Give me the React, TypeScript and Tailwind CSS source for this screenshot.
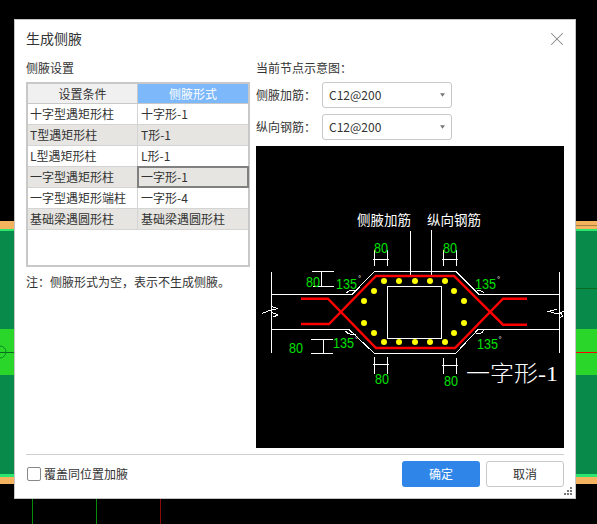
import React from 'react';
import { X } from 'lucide-react';

const font = { fontFamily: '"Noto Sans CJK SC", sans-serif' };

const rows = [
  ['十字型遇矩形柱', '十字形-1'],
  ['T型遇矩形柱', 'T形-1'],
  ['L型遇矩形柱', 'L形-1'],
  ['一字型遇矩形柱', '一字形-1'],
  ['一字型遇矩形端柱', '一字形-4'],
  ['基础梁遇圆形柱', '基础梁遇圆形柱'],
];

// CAD canvas behind the dialog
const CadCanvas = () => (
  <svg className="absolute inset-0 block" width="597" height="524" viewBox="0 0 597 524" shapeRendering="crispEdges">
    <rect width="597" height="524" fill="#000" />
    <rect y="221" width="597" height="8" fill="#f4b45f" />
    <rect x="576" y="225" width="21" height="1" fill="#a87f3c" />
    <rect y="229" width="597" height="2" fill="#2ee56e" />
    <rect y="231" width="597" height="98" fill="#078a4a" />
    <rect y="329" width="597" height="46" fill="#2bd62b" />
    <rect y="375" width="597" height="99" fill="#078a4a" />
    <rect y="474" width="597" height="3" fill="#2ee56e" />
    <rect y="477" width="597" height="7" fill="#f4b45f" />
    <rect x="576" y="288" width="21" height="1" fill="#0a6a20" />
    <rect y="352" width="14" height="1" fill="#0a6a20" />
    <circle cx="0" cy="352" r="6" fill="none" stroke="#0a8a20" shapeRendering="auto" />
    <rect x="576" y="352" width="21" height="1" fill="#ff0000" />
    <rect x="32" y="499" width="1" height="25" fill="#0a8a0a" />
    <rect x="96" y="499" width="1" height="25" fill="#0a8a0a" />
    <rect x="160" y="499" width="1" height="25" fill="#8a0a0a" />
  </svg>
);

const Dim = ({ d }: { d: string }) => <path d={d} fill="none" stroke="#fff" strokeWidth="1" shapeRendering="crispEdges" />;

const GreenNum = ({ x, y, n }: { x: number; y: number; n: string }) => (
  <text x={x} y={y} fill="#00e000" fontSize="15" textLength={n.length * 7} lengthAdjust="spacingAndGlyphs" style={{ fontFamily: '"Liberation Sans", sans-serif' }}>
    {n}
  </text>
);

const dots = [
  [384, 281], [399, 281], [415, 281], [430, 281], [445, 281],
  [374, 291], [364, 301], [454, 291], [464, 301],
  [364, 323], [374, 333], [464, 323], [454, 333],
  [384, 342], [399, 342], [415, 342], [430, 342], [445, 342],
];

// node sketch, coordinates follow the page so they are easy to compare
const NodeSketch = () => (
  <svg className="block" width="308" height="302" viewBox="256 146 308 302">
    <rect x="256" y="146" width="308" height="302" fill="#000" />
    <g fill="none" stroke="#fff" strokeWidth="1" shapeRendering="crispEdges">
      <path d="M271 272V353M559 272V353" />
      <path d="M271 294.5H352L374.5 271.5H456L479 294.5H559" />
      <path d="M271 329.5H349L374 353H456L478 329.5H559" />
      <path d="M387.5 286.5H441.5V338.5H387.5Z" />
      <path d="M410.5 231V276M431 230V276" />
      <path d="M262 313.5L271 310L278 308.5L271 306.5M271 312L278 315L273 317" />
      <path d="M557 309L549 311.5L557 314L564 311M559 311L563 316L559 318" />
    </g>
    <g fill="none" stroke="#ff0000" strokeWidth="2.4">
      <path d="M301 298.7H328L376 348H455L503 298.7H527" />
      <path d="M301 324H329L376 276H454L503 324.7H527" />
    </g>
    {dots.map(([x, y]) => (
      <circle key={`${x}-${y}`} cx={x} cy={y} r="3" fill="#ffff00" />
    ))}
    <Dim d="M374.3 250V265.7M387.7 250V265.7M373 259H389" />
    <Dim d="M443.3 250V265.7M456 250V265.7M442 259H457.5" />
    <Dim d="M312 271.3H334M313 286.7H334M321.7 271V287" />
    <Dim d="M311 339.3H333M311 353.3H333M323 339V354" />
    <Dim d="M374.3 357V374M387 357V374M373 364.3H388.5" />
    <Dim d="M443.3 358V374M456 358V374M442 365H457.5" />
    <Dim d="M346 293Q351 289 355 291M477 291Q482 290 484 293M345 331Q350 336 356 334M476 334Q482 334 484 330" />
    <GreenNum x={374} y={253} n="80" />
    <GreenNum x={443} y={253} n="80" />
    <GreenNum x={306} y={287} n="80" />
    <GreenNum x={289} y={352.5} n="80" />
    <GreenNum x={375} y={383.5} n="80" />
    <GreenNum x={444} y={386} n="80" />
    <GreenNum x={336} y={289} n="135" />
    <GreenNum x={475} y={289} n="135" />
    <GreenNum x={333} y={348} n="135" />
    <GreenNum x={477} y={349} n="135" />
    <g fill="#fff" fontSize="8" style={{ fontFamily: '"Liberation Sans", sans-serif' }}>
      <text x="358" y="281">°</text>
      <text x="497" y="282">°</text>
      <text x="355" y="342">°</text>
      <text x="498.5" y="342">°</text>
    </g>
    <g fill="#fff" style={font}>
      <text x="357" y="225" fontSize="13.5">侧腋加筋</text>
      <text x="427" y="225" fontSize="13.5">纵向钢筋</text>
      <text
        x="466"
        y="381"
        fontSize="22"
        fontWeight="200"
        textLength="92"
        lengthAdjust="spacingAndGlyphs"
        style={{ fontFamily: '"Liberation Serif", "Noto Sans CJK SC", serif' }}
      >
        一字形-1
      </text>
    </g>
  </svg>
);

const SelectRow = ({ label }: { label: string }) => (
  <div className="flex items-center h-[26px]">
    <span className="w-[66px] text-[12px] text-[#333]">{label}</span>
    <div className="flex-1 w-[130px] max-w-[130px] h-[26px] border border-[#c8c8c8] rounded-[3px] flex items-center justify-between pl-[6px] pr-[5px] text-[12px] text-[#333]">
      <span>C12@200</span>
      <svg width="5" height="4" viewBox="0 0 6 4" className="mr-[1px]">
        <path d="M0 0H6L3 4Z" fill="#777" />
      </svg>
    </div>
  </div>
);

export default function App() {
  return (
    <div className="relative w-[597px] h-[524px] overflow-hidden bg-black" style={font}>
      <CadCanvas />

      <div className="absolute left-[14px] top-[19px] w-[562px] h-[480px] bg-white border border-[#c4c4c4] flex flex-col px-[11px]">
        <div className="h-[38px] pb-[2px] flex items-center justify-between shrink-0">
          <span className="text-[14px] text-[#333]">生成侧腋</span>
          <X className="w-[22px] h-[22px] text-[#888] -mr-[4px] mt-[1px]" strokeWidth={1.1} />
        </div>

        <div className="flex gap-[6px]">
          <div className="w-[224px] shrink-0">
            <div className="h-[20px] mb-[4px] flex items-center text-[12px] text-[#333]">侧腋设置</div>
            <div className="h-[185px] border-2 border-[#c8c8c8] text-[12px] text-[#333]">
              <div className="flex h-[20px] border-b border-[#c8c8c8]">
                <div className="w-[110px] bg-[#f0f0f0] border-r border-[#c8c8c8] flex items-center justify-center">设置条件</div>
                <div className="flex-1 bg-[#7cb8fa] text-white flex items-center justify-center">侧腋形式</div>
              </div>
              {rows.map(([a, b], i) => (
                <div key={a} className={`flex h-[21px] border-b border-[#d4d4d4] ${i % 2 === 1 ? 'bg-[#e6e5e1]' : 'bg-white'}`}>
                  <div className="w-[110px] border-r border-[#d4d4d4] pl-[2px] flex items-center whitespace-nowrap">{a}</div>
                  <div className={`flex-1 pl-[3px] flex items-center whitespace-nowrap ${i === 3 ? 'outline-2 -outline-offset-1 outline-[#808080]' : ''}`}>{b}</div>
                </div>
              ))}
            </div>
            <div className="mt-[5px] text-[12px] leading-[20px] text-[#333]">注：侧腋形式为空，表示不生成侧腋。</div>
          </div>

          <div className="w-[308px] shrink-0">
            <div className="h-[20px] mb-[4px] flex items-center text-[12px] text-[#333]">当前节点示意图：</div>
            <div className="flex flex-col gap-[6px] mb-[6px]">
              <SelectRow label="侧腋加筋：" />
              <SelectRow label="纵向钢筋：" />
            </div>
            <NodeSketch />
          </div>
        </div>

        <div className="mt-[6px] border-t border-[#cfcfcf] h-[1px] shrink-0" />

        <div className="flex items-center justify-between pt-[6px]">
          <label className="flex items-center gap-[3px] text-[12px] text-[#333] ml-[1px]">
            <span className="w-[14px] h-[14px] border border-[#888] rounded-[2px] bg-white" />
            覆盖同位置加腋
          </label>
          <div className="flex gap-[6px]">
            <button className="w-[78px] h-[26px] bg-[#2f86e8] text-white text-[12px] rounded-[3px]">确定</button>
            <button className="w-[78px] h-[26px] bg-white border border-[#c8c8c8] text-[#333] text-[12px] rounded-[3px]">取消</button>
          </div>
        </div>

        <svg className="absolute right-[3px] bottom-[3px]" width="8" height="8" viewBox="0 0 8 8" shapeRendering="crispEdges">
          <path d="M6 0h2v2H6zM3 3h2v2H3zM6 3h2v2H6zM0 6h2v2H0zM3 6h2v2H3zM6 6h2v2H6z" fill="#777" />
        </svg>
      </div>
    </div>
  );
}
